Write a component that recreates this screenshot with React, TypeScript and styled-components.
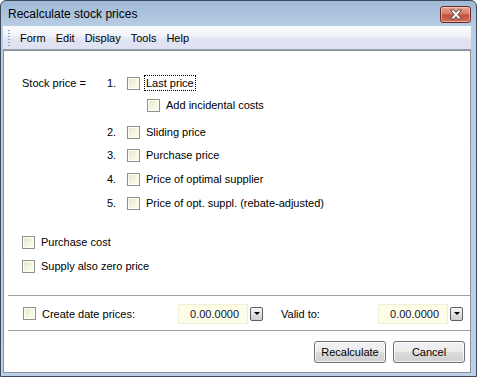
import React from 'react';
import styled, { createGlobalStyle } from 'styled-components';

const GlobalStyle = createGlobalStyle`
  html, body {
    margin: 0;
    padding: 0;
    background: #ffffff;
  }
  body {
    font-family: 'Liberation Sans', Arial, sans-serif;
    font-size: 11px;
    color: #000;
  }
`;

const StyledWindow = styled.div`
  width: 477px;
  height: 377px;
  box-sizing: border-box;
  border: 1px solid #3d4a5a;
  border-radius: 6px 6px 0 0;
  background: linear-gradient(180deg, #9fbad7 0px, #b9cee5 26px, #bcd1e8 100%);
  display: flex;
  flex-direction: column;
  overflow: hidden;
`;

const TitleBar = styled.div`
  height: 25px;
  display: flex;
  align-items: center;
  padding: 0 5px 0 7px;
  flex-shrink: 0;
`;

const Title = styled.span`
  flex: 1;
  font-size: 12px;
  color: #000;
  padding-top: 1px;
`;

const CloseButton = styled.div`
  width: 29px;
  height: 15px;
  margin-top: 2px;
  border: 1px solid #6a2b24;
  border-radius: 3px;
  background: linear-gradient(180deg, #e7a899 0%, #d47a66 45%, #c2503a 55%, #d0705a 100%);
  box-shadow: inset 0 0 0 1px rgba(255, 220, 210, 0.55);
  display: flex;
  align-items: center;
  justify-content: center;
`;

const Frame = styled.div`
  flex: 1;
  display: flex;
  flex-direction: column;
  padding: 0 5px 3px 2px;
`;

const MenuBar = styled.div`
  height: 24px;
  display: flex;
  align-items: center;
  background: linear-gradient(180deg, #fbfcfe 0%, #f1f3fa 40%, #e0e4f2 60%, #dde1f1 100%);
  border-bottom: 1px solid #9aa0ad;
  box-sizing: border-box;
  padding-left: 5px;
`;

const Grip = styled.div`
  width: 2px;
  height: 18px;
  margin-right: 5px;
  background-image: radial-gradient(circle, #9aa3b5 45%, transparent 50%);
  background-size: 2px 3px;
`;

const MenuItem = styled.span`
  padding: 0 5px;
  line-height: 22px;
`;

const Panel = styled.div`
  flex: 1;
  background: #fff;
  border: 1px solid #8a8f99;
  display: flex;
  flex-direction: column;
`;

const OptionsSection = styled.div`
  flex: 1;
  display: flex;
  flex-direction: column;
  padding: 20px 0 0 18px;
`;

const Row = styled.div<{ $top?: number; $indent?: number }>`
  height: 24px;
  display: flex;
  align-items: center;
  margin-top: ${p => p.$top ?? 0}px;
  padding-left: ${p => p.$indent ?? 0}px;
`;

const LeadLabel = styled.span`
  width: 85px;
`;

const Number = styled.span`
  width: 20px;
`;

const Check = styled.span`
  width: 11px;
  height: 11px;
  border: 1px solid #8f8f8f;
  box-shadow: inset 0 0 0 1px #fdfdf2;
  background: linear-gradient(135deg, #e6e6c8 0%, #f6f6e2 60%, #fcfcf2 100%);
  margin-right: 6px;
  flex-shrink: 0;
`;

const Label = styled.span<{ $focus?: boolean }>`
  border: 1px dotted ${p => (p.$focus ? '#000' : 'transparent')};
  padding: 0 1px;
  margin-left: -2px;
  line-height: 14px;
`;

const Separator = styled.div`
  margin-left: 4px;
  border-top: 1px solid #a0a0a0;
  border-bottom: 1px solid #fff;
`;

const DateRow = styled.div`
  height: 33px;
  display: flex;
  align-items: center;
  padding-left: 19px;
`;

const DateLabel = styled.span<{ $width: number; $gap?: number }>`
  width: ${p => p.$width}px;
  margin-left: ${p => p.$gap ?? 0}px;
`;

const DateField = styled.span`
  width: 70px;
  height: 20px;
  box-sizing: border-box;
  background: #fefee8;
  border: 1px solid #f0f0d8;
  text-align: right;
  padding-right: 8px;
  line-height: 18px;
  color: #10103a;
`;

const DropButton = styled.span`
  width: 11px;
  height: 12px;
  margin-left: 2px;
  border: 1px solid #5d5d5d;
  border-radius: 2px;
  background: linear-gradient(180deg, #f6f6f6 0%, #e2e2e2 50%, #cfcfcf 100%);
  display: flex;
  align-items: center;
  justify-content: center;
`;

const Arrow = styled.span`
  width: 0;
  height: 0;
  border-left: 3px solid transparent;
  border-right: 3px solid transparent;
  border-top: 3px solid #000;
`;

const ButtonRow = styled.div`
  height: 39px;
  display: flex;
  align-items: center;
  justify-content: flex-end;
  gap: 7px;
  padding: 0 5px 1px 0;
`;

const Button = styled.button`
  width: 72px;
  height: 22px;
  font-family: 'Liberation Sans', Arial, sans-serif;
  font-size: 11px;
  color: #000;
  border: 1px solid #707070;
  border-radius: 3px;
  background: linear-gradient(180deg, #f2f2f2 0%, #ebebeb 50%, #dddddd 51%, #cfcfcf 100%);
  box-shadow: inset 0 0 0 1px rgba(255, 255, 255, 0.7);
  padding: 0;
`;

const CloseGlyph = () => (
  <svg width="14" height="11" viewBox="0 0 14 11">
    <path
      d="M1.5 1 L5 1 L7 3.5 L9 1 L12.5 1 L8.8 5.5 L12.5 10 L9 10 L7 7.5 L5 10 L1.5 10 L5.2 5.5 Z"
      fill="#ffffff"
      stroke="#4a4a4a"
      strokeWidth="0.9"
      strokeLinejoin="round"
    />
  </svg>
);

const menus = ['Form', 'Edit', 'Display', 'Tools', 'Help'];

const prices = [
  { n: '2.', label: 'Sliding price', top: 3 },
  { n: '3.', label: 'Purchase price', top: -1 },
  { n: '4.', label: 'Price of optimal supplier', top: 0 },
  { n: '5.', label: 'Price of opt. suppl. (rebate-adjusted)', top: 0 },
];

const DateInput = () => (
  <>
    <DateField>0.00.0000</DateField>
    <DropButton>
      <Arrow />
    </DropButton>
  </>
);

const App = () => (
  <>
    <GlobalStyle />
    <StyledWindow>
      <TitleBar>
        <Title>Recalculate stock prices</Title>
        <CloseButton>
          <CloseGlyph />
        </CloseButton>
      </TitleBar>
      <Frame>
        <MenuBar>
          <Grip />
          {menus.map(m => (
            <MenuItem key={m}>{m}</MenuItem>
          ))}
        </MenuBar>
        <Panel>
          <OptionsSection>
            <Row>
              <LeadLabel>Stock price =</LeadLabel>
              <Number>1.</Number>
              <Check />
              <Label $focus>Last price</Label>
            </Row>
            <Row $top={-2} $indent={125}>
              <Check />
              <Label>Add incidental costs</Label>
            </Row>
            {prices.map(p => (
              <Row key={p.n} $top={p.top} $indent={85}>
                <Number>{p.n}</Number>
                <Check />
                <Label>{p.label}</Label>
              </Row>
            ))}
            <Row $top={15}>
              <Check />
              <Label>Purchase cost</Label>
            </Row>
            <Row>
              <Check />
              <Label>Supply also zero price</Label>
            </Row>
          </OptionsSection>
          <Separator />
          <DateRow>
            <Check />
            <DateLabel $width={136}>Create date prices:</DateLabel>
            <DateInput />
            <DateLabel $width={97} $gap={18}>
              Valid to:
            </DateLabel>
            <DateInput />
          </DateRow>
          <Separator />
          <ButtonRow>
            <Button>Recalculate</Button>
            <Button>Cancel</Button>
          </ButtonRow>
        </Panel>
      </Frame>
    </StyledWindow>
  </>
);

export default App;
